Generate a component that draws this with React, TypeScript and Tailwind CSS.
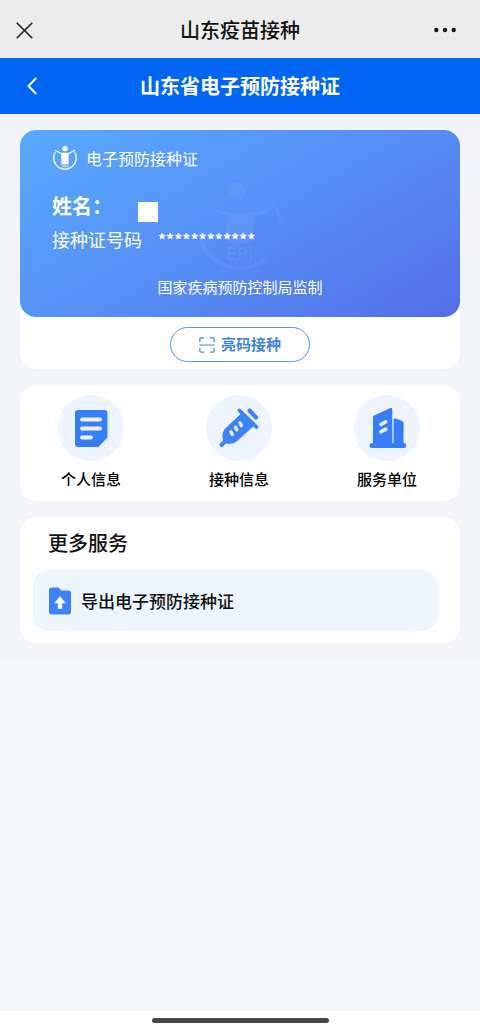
import type { ReactNode } from "react";

function EmblemIcon({ className }: { className: string }) {
  return (
    <svg viewBox="0 0 26 26" fill="none" className={className} aria-hidden="true">
      <circle cx="13" cy="3.600" r="2.700" fill="currentColor" />
      <path d="M3.500 5.500 9 8.500h8l5.500-3" stroke="currentColor" strokeWidth="1.400" strokeLinecap="round" strokeLinejoin="round" />
      <path d="M9.300 8.500h7.400v11H9.300z" fill="currentColor" />
      <path d="M9.800 20.300h6.400v2H9.800z" fill="currentColor" opacity=".5" />
      <path d="M3 7.500a11.300 11.300 0 1 0 20 0" stroke="currentColor" strokeWidth="1.300" strokeLinecap="round" />
    </svg>
  );
}

function WatermarkIcon({ className }: { className: string }) {
  return (
    <svg viewBox="0 0 100 100" fill="none" className={className} aria-hidden="true">
      <circle cx="43" cy="14" r="9" fill="currentColor" />
      <path d="M22 33c16 8 42 8 60-5" stroke="currentColor" strokeWidth="4" />
      <path d="M32 40h27v26H32z" fill="currentColor" />
      <path d="M5 54c3 22 18 37 42 37 9 0 16-2 24-8M82 30l6 16" stroke="currentColor" strokeWidth="4" />
      <text x="32" y="83" fontSize="17" fontWeight="700" fill="currentColor">EPI</text>
    </svg>
  );
}

function ScanIcon() {
  return (
    <svg viewBox="0 0 16 16" fill="none" stroke="currentColor" strokeWidth="1.200" className="size-4" aria-hidden="true">
      <path d="M.8 5V2.300A1.500 1.500 0 0 1 2.300.8H5M11 .8h2.700a1.500 1.500 0 0 1 1.500 1.500V5M15.200 11v2.700a1.500 1.500 0 0 1-1.500 1.500H11M5 15.200H2.300a1.500 1.500 0 0 1-1.500-1.500V11M.3 8h15.400" />
    </svg>
  );
}

function DocumentIcon() {
  return (
    <svg viewBox="0 0 66 66" className="size-full" aria-hidden="true">
      <path d="M20 15h26.500a3 3 0 0 1 3 3v24.500L40.500 52H20a3 3 0 0 1-3-3V18a3 3 0 0 1 3-3z" fill="#377df8" />
      <path d="M24 24.500h18M24 33.500h18M24 42.500h9" stroke="#edf4ff" strokeWidth="3.800" strokeLinecap="round" />
    </svg>
  );
}

function SyringeIcon() {
  return (
    <svg viewBox="0 0 66 66" className="size-full" aria-hidden="true">
      <g stroke="#3d82f8" strokeLinecap="round" strokeLinejoin="round">
        <path d="M33.500 15.500 50.500 32" strokeWidth="3.800" />
        <path d="m43.500 15.500 6.500 7" strokeWidth="4.200" />
        <path d="m15.500 50 5-5" strokeWidth="4" />
        <path d="M36.500 20 20 35.500c-1.700 2.500-1.800 7-.8 10.300 3 1.700 7.500 1.400 10-.8L46.500 29.500z" fill="#3d82f8" strokeWidth="4" />
      </g>
      <path d="m25 37 1.300 2.400M29.500 32.400l1.300 2.400M34 28l1.300 2.400" stroke="#edf4ff" strokeWidth="3.400" strokeLinecap="round" />
    </svg>
  );
}

function BuildingIcon() {
  return (
    <svg viewBox="0 0 66 66" className="size-full" aria-hidden="true">
      <path d="M19 48V22.500c0-1.200.6-1.800 1.700-2.300L36 13.300c1.400-.6 2.300 0 2.300 1.500V48h1.200V23.800l2-.3 6.200 2.300c1.200.5 1.900 1.300 1.900 2.500V48a2.500 2.500 0 0 1 0 5H18a2.500 2.500 0 0 1 0-5z" fill="#377df8" />
      <path d="m27 29.500 4.800-2.700M27 36.800l4.800-2.700" stroke="#edf4ff" strokeWidth="3.600" strokeLinecap="round" />
    </svg>
  );
}

function ExportIcon() {
  return (
    <svg viewBox="0 0 22 28" className="h-7 w-[22px]" aria-hidden="true">
      <path d="M2.500.5h6.200c.8 0 1.300.3 1.800 1l1.500 2h7.500A2.500 2.500 0 0 1 22 6v19a2.500 2.500 0 0 1-2.500 2.500h-17A2.500 2.500 0 0 1 0 25V3A2.500 2.500 0 0 1 2.500.5z" fill="#3d82f8" />
      <path d="m11 9.500 5.300 6.500h-3.500v5.500H9.200V16H5.700z" fill="#fff" stroke="#fff" strokeWidth=".6" strokeLinejoin="round" />
    </svg>
  );
}

const shortcuts: { label: string; icon: ReactNode }[] = [
  { label: "个人信息", icon: <DocumentIcon /> },
  { label: "接种信息", icon: <SyringeIcon /> },
  { label: "服务单位", icon: <BuildingIcon /> },
];

export default function App() {
  return (
    <div className="flex min-h-screen flex-col bg-[#f4f6f9] font-['Noto_Sans_CJK_SC',sans-serif] text-[#111]">
      <header>
        <div className="grid h-[58px] grid-cols-[48px_1fr_48px] items-center bg-[#ececec]">
          <button type="button" aria-label="关闭" className="flex h-full items-center pt-0.5 pl-4">
            <svg viewBox="0 0 17 17" className="size-[17px]" stroke="#222" strokeWidth="1.600" aria-hidden="true">
              <path d="m.7.7 15.600 15.600M16.300.7.7 16.300" />
            </svg>
          </button>
          <p className="pt-0.5 text-center text-[20px] leading-7 font-medium">山东疫苗接种</p>
          <button type="button" aria-label="更多" className="flex h-full items-center justify-end pt-0.5 pr-6">
            <svg viewBox="0 0 22 6" className="h-1.5 w-[22px]" fill="#151515" aria-hidden="true">
              <circle cx="2.300" cy="3" r="2.200" />
              <circle cx="11" cy="3" r="2.200" />
              <circle cx="19.700" cy="3" r="2.200" />
            </svg>
          </button>
        </div>
        <div className="grid h-14 grid-cols-[48px_1fr_48px] items-center bg-[#0066f2] text-white">
          <button type="button" aria-label="返回" className="flex h-full items-center pl-[27px]">
            <svg viewBox="0 0 10 18" className="h-[18px] w-2.5" fill="none" stroke="currentColor" strokeWidth="2" aria-hidden="true">
              <path d="M9.200 1 1.500 9l7.700 8" />
            </svg>
          </button>
          <h1 className="text-center text-[20px] leading-7 font-bold">山东省电子预防接种证</h1>
        </div>
      </header>

      <main className="flex flex-col gap-4 bg-[#f3f4f9] px-5 py-4">
        <section className="rounded-2xl bg-white">
          <div className="relative flex h-[187px] flex-col rounded-2xl bg-linear-[150deg,#58aaff_0%,#568ff6_50%,#546ee8_100%] px-8 text-white">
            <WatermarkIcon className="absolute top-[47px] left-[174px] size-[100px] text-white/6" />
            <div className="mt-3.5 flex items-center gap-2 text-[16px] leading-7">
              <EmblemIcon className="size-[26px]" />
              电子预防接种证
            </div>
            <div className="mt-5 flex h-7 items-center text-[20px] leading-7 font-bold">
              <span className="w-[86px]">姓名：</span>
              <span className="mt-3 size-5 bg-white" />
            </div>
            <div className="mt-[7px] flex items-center gap-4 text-[18px] leading-6">
              接种证号码
              <span className="w-[98px] overflow-hidden text-[16px] font-bold whitespace-nowrap">*************</span>
            </div>
            <p className="mt-6 text-center text-[15px] leading-6">国家疾病预防控制局监制</p>
          </div>
          <div className="flex justify-center pt-2.5 pb-[7px]">
            <button type="button" className="flex h-[35px] w-[140px] items-center justify-center gap-1.5 rounded-full border border-[#5b96d6] text-[15px] font-bold text-[#4384d6]">
              <ScanIcon />
              亮码接种
            </button>
          </div>
        </section>

        <nav className="flex justify-between rounded-2xl bg-white pt-2.5 pr-10 pb-2.5 pl-[38px]">
          {shortcuts.map(({ label, icon }) => (
            <button key={label} type="button" className="flex flex-col items-center gap-1.5 text-[15px] leading-6 font-medium text-black">
              <span className="size-[66px] rounded-full bg-[#edf4ff]">{icon}</span>
              {label}
            </button>
          ))}
        </nav>

        <section className="rounded-2xl bg-white pt-3 pr-[22px] pb-3 pl-[13px]">
          <h2 className="pl-[15px] text-[20px] leading-7 font-medium">更多服务</h2>
          <button type="button" className="mt-[13px] flex h-[61px] w-full items-center gap-2.5 rounded-2xl bg-[#ecf4fe] px-4 text-[17px] font-medium">
            <ExportIcon />
            导出电子预防接种证
          </button>
        </section>
      </main>

      <footer className="mt-auto flex h-[19px] items-center justify-center bg-white">
        <div className="h-[5px] w-[177px] rounded-full bg-[#444648]" />
      </footer>
    </div>
  );
}
